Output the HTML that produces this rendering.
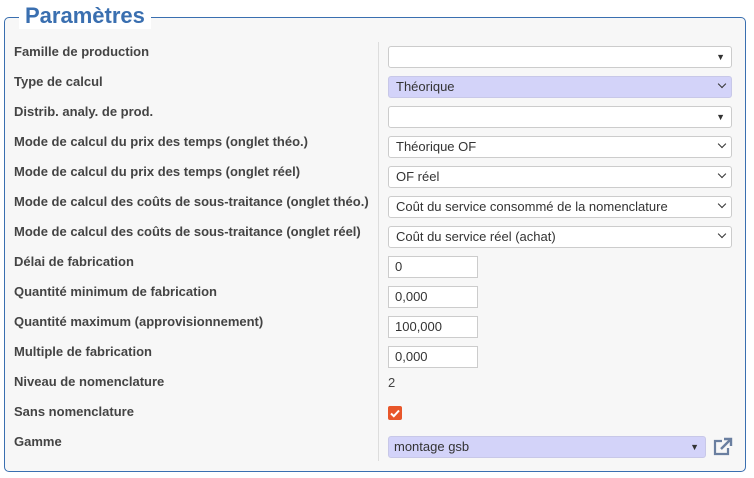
<!DOCTYPE html>
<html><head><meta charset="utf-8"><style>
body{margin:0;background:#fff;font-family:"Liberation Sans",sans-serif;width:754px;height:478px;position:relative;overflow:hidden}
.fs{position:absolute;left:4px;top:17px;width:740px;height:453px;border:1px solid #3a6fb0;border-radius:5px;background:#f7f7f7}
.lg{position:absolute;left:19px;top:3px;padding:0 6px;background:#fff;color:#3a6fb0;font-weight:bold;font-size:22px;line-height:26px}
.lg:after{content:"";}
.div{position:absolute;left:378px;top:42px;width:1px;height:419px;background:#ddd}
.l{position:absolute;left:14px;font-size:13px;font-weight:bold;color:#444}
.s{position:absolute;left:388px;width:342px;height:20px;border:1px solid #ccc;border-radius:3px;background:#fff;font-size:13px;color:#333;line-height:20px;padding-left:7px;box-sizing:content-box}
.s.b{background:#d3d3f9;border-color:#c8c8e8}
.ar{position:absolute;right:6px;top:0;font-size:9px}
.cv{position:absolute;right:6px;top:5px;width:5px;height:5px;border-right:1.3px solid #333;border-bottom:1.3px solid #333;transform:rotate(45deg);top:4px}
.t{position:absolute;left:388px;width:82px;height:20px;border:1px solid #ccc;background:#fff;font-size:13px;color:#333;line-height:20px;padding-left:6px}
</style></head><body>
<div class="fs"></div>
<div class="lg">Paramètres</div>
<div class="div"></div>
<div class="l" style="top:44px">Famille de production</div>
<div class="l" style="top:74px">Type de calcul</div>
<div class="l" style="top:104px">Distrib. analy. de prod.</div>
<div class="l" style="top:134px">Mode de calcul du prix des temps (onglet théo.)</div>
<div class="l" style="top:164px">Mode de calcul du prix des temps (onglet réel)</div>
<div class="l" style="top:194px">Mode de calcul des coûts de sous-traitance (onglet théo.)</div>
<div class="l" style="top:224px">Mode de calcul des coûts de sous-traitance (onglet réel)</div>
<div class="l" style="top:254px">Délai de fabrication</div>
<div class="l" style="top:284px">Quantité minimum de fabrication</div>
<div class="l" style="top:314px">Quantité maximum (approvisionnement)</div>
<div class="l" style="top:344px">Multiple de fabrication</div>
<div class="l" style="top:374px">Niveau de nomenclature</div>
<div class="l" style="top:404px">Sans nomenclature</div>
<div class="l" style="top:434px">Gamme</div>

<div class="s" style="top:46px;width:335px"><span class="ar">▼</span></div>
<div class="s b" style="top:76px;width:335px">Théorique<span class="cv"></span></div>
<div class="s" style="top:106px;width:335px"><span class="ar">▼</span></div>
<div class="s" style="top:136px;width:335px">Théorique OF<span class="cv"></span></div>
<div class="s" style="top:166px;width:335px">OF réel<span class="cv"></span></div>
<div class="s" style="top:196px;width:335px">Coût du service consommé de la nomenclature<span class="cv"></span></div>
<div class="s" style="top:226px;width:335px">Coût du service réel (achat)<span class="cv"></span></div>
<div class="t" style="top:256px">0</div>
<div class="t" style="top:286px">0,000</div>
<div class="t" style="top:316px">100,000</div>
<div class="t" style="top:346px">0,000</div>
<div style="position:absolute;left:388px;top:375px;font-size:13px;color:#444">2</div>
<div style="position:absolute;left:388px;top:406px;width:14px;height:14px;background:#e8562a;border-radius:2px"><svg width="14" height="14"><path d="M3 7.5l2.8 2.7L11 4.5" stroke="#fff" stroke-width="2" fill="none"/></svg></div>
<div class="s b" style="top:436px;width:311px;left:388px;padding-left:5px">montage gsb<span class="ar">▼</span></div>
<svg style="position:absolute;left:712px;top:437px" width="21" height="20" viewBox="0 0 21 20"><path d="M10 4H3v13h13v-6" stroke="#6a7fa0" stroke-width="2.2" fill="none"/><path d="M9 12l9-9M12 2h7v7" stroke="#6a7fa0" stroke-width="2.4" fill="none"/></svg>
</body></html>
